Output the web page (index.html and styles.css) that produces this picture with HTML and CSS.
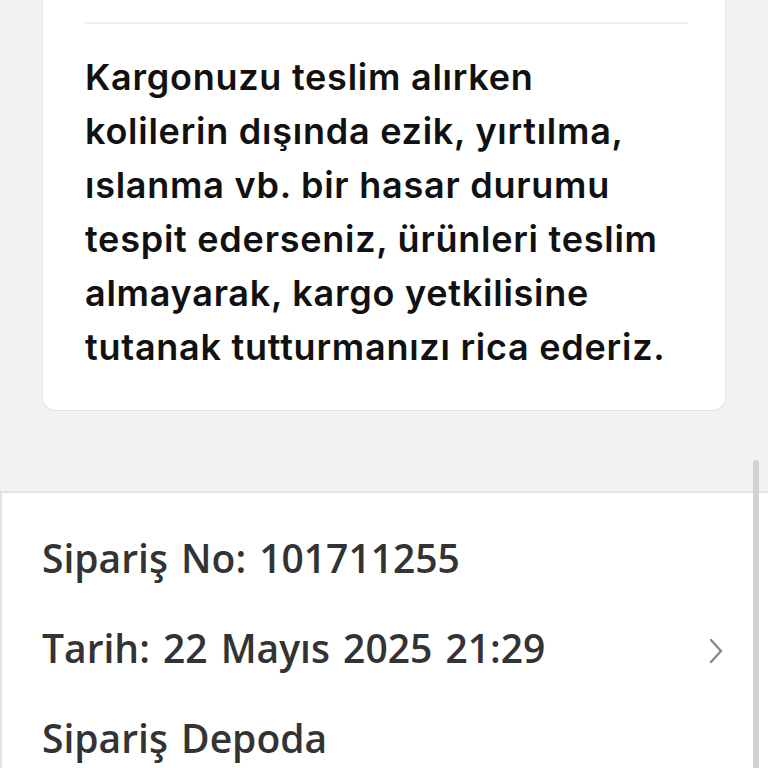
FILE: index.html
```html
<!DOCTYPE html>
<html lang="tr">
<head>
<meta charset="utf-8">
<link rel="stylesheet" href="styles.css">
</head>
<body>
<div class="page">
  <section class="card">
    <div class="card-top"></div>
    <div class="divider"></div>
    <p class="notice">Kargonuzu teslim alırken<br>kolilerin dışında ezik, yırtılma,<br>ıslanma vb. bir hasar durumu<br>tespit ederseniz, ürünleri teslim<br>almayarak, kargo yetkilisine<br>tutanak tutturmanızı rica ederiz.</p>
  </section>
  <section class="panel">
    <div class="row">Sipariş No: 101711255</div>
    <div class="row row-link">
      <span>Tarih: 22 Mayıs 2025 21:29</span>
      <svg class="chev" width="16" height="28" viewBox="0 0 16 28"><path d="M3 3 L13 14 L3 25" fill="none" stroke="#8a8a8a" stroke-width="2.4" stroke-linecap="round" stroke-linejoin="round"/></svg>
    </div>
    <div class="row">Sipariş Depoda</div>
  </section>
  <div class="scrollbar"></div>
</div>
</body>
</html>
```
FILE: styles.css
```css
* { box-sizing: border-box; }
html, body { margin: 0; padding: 0; }
body {
  background: #f2f2f2;
  width: 768px;
  height: 768px;
  overflow: hidden;
}
.page {
  position: relative;
  width: 768px;
  height: 768px;
  overflow: hidden;
}
.card {
  margin: 0 42px;
  width: 684px;
  background: #ffffff;
  border: 1px solid #e3e3e3;
  border-top: none;
  border-radius: 0 0 14px 14px;
}
.card-top { height: 22px; }
.divider {
  height: 2px;
  background: #efefef;
  margin: 0 37px 0 42px;
}
.notice {
  margin: 0;
  padding: 26px 10px 36px 42px;
  font-family: Inter, "Noto Sans", sans-serif;
  font-weight: 600;
  font-size: 36px;
  line-height: 54px;
  color: #111111;
  letter-spacing: 0.75px;
  white-space: nowrap;
}
.panel {
  margin-top: 80px;
  background: #ffffff;
  border-top: 2px solid #e3e3e3;
  border-left: 2px solid #e3e3e3;
  padding: 20px 0 0 40px;
  height: 300px;
}
.row {
  font-family: "Open Sans", "Noto Sans", sans-serif;
  font-weight: 600;
  font-size: 39px;
  line-height: 90px;
  word-spacing: 3px;
  color: #333333;
  height: 90px;
  white-space: nowrap;
}
.row-link {
  display: flex;
  align-items: center;
  justify-content: space-between;
  padding-right: 44px;
}
.chev { display: block; margin-top: 6px; }
.scrollbar {
  position: absolute;
  left: 753px;
  top: 460px;
  width: 6px;
  height: 320px;
  background: #d2d2d2;
  border-radius: 3px 3px 0 0;
}
```
